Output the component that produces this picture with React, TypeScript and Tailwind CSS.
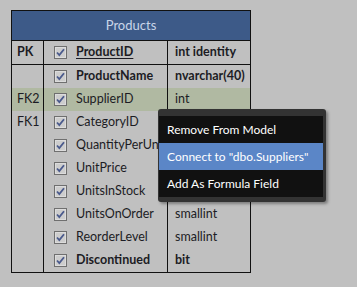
import React from 'react';

interface Column {
  key: string;
  name: string;
  type: string;
  bold?: boolean;
  highlight?: boolean;
}

const columns: Column[] = [
  { key: '', name: 'ProductName', type: 'nvarchar(40)', bold: true },
  { key: 'FK2', name: 'SupplierID', type: 'int', highlight: true },
  { key: 'FK1', name: 'CategoryID', type: 'int' },
  { key: '', name: 'QuantityPerUnit', type: 'nvarchar(20)' },
  { key: '', name: 'UnitPrice', type: 'money' },
  { key: '', name: 'UnitsInStock', type: 'smallint' },
  { key: '', name: 'UnitsOnOrder', type: 'smallint' },
  { key: '', name: 'ReorderLevel', type: 'smallint' },
  { key: '', name: 'Discontinued', type: 'bit', bold: true },
];

const Check = () => (
  <svg width="13" height="13" viewBox="0 0 13 13" className="shrink-0">
    <rect x="0.5" y="0.5" width="12" height="12" fill="#cdcdcd" stroke="#6f6f6f" />
    <rect x="1.5" y="1.5" width="10" height="10" fill="none" stroke="#dcdcdc" />
    <path d="M3 6.5 L5.3 9 L10 3.2" fill="none" stroke="#4a5a8c" strokeWidth="1.8" />
  </svg>
);

const menuItems = ['Remove From Model', 'Connect to "dbo.Suppliers"', 'Add As Formula Field'];

export default function App() {
  return (
    <div
      className="relative w-[357px] h-[287px] bg-[#c0c0c0] overflow-hidden text-[12.5px] text-[#1c1c24]"
      style={{ fontFamily: 'Lato, "Noto Sans", sans-serif' }}
    >
      <div className="absolute left-[11px] top-[10px] w-[240px] border border-[#111]">
        <div className="h-[30px] bg-[#3d5a88] border-b border-[#111] flex items-center justify-center text-[#c9d5e8] text-[13px]">
          Products
        </div>
        <div className="flex h-[24px] border-b border-[#111] font-bold">
          <div className="w-[32px] border-r border-[#111] pl-[5px] flex items-center">PK</div>
          <div className="w-[124px] border-r border-[#111] pl-[10px] flex items-center gap-[9px]">
            <Check />
            <span className="underline underline-offset-2">ProductID</span>
          </div>
          <div className="flex-1 pl-[7px] flex items-center whitespace-nowrap">int identity</div>
        </div>
        {columns.map((c) => (
          <div
            key={c.name}
            className={`flex h-[23px] ${c.highlight ? 'bg-[#b0b9a2]' : ''} ${c.bold ? 'font-bold' : ''}`}
          >
            <div className="w-[32px] border-r border-[#111] pl-[5px] flex items-center">{c.key}</div>
            <div className="w-[124px] border-r border-[#111] pl-[10px] flex items-center gap-[9px] overflow-hidden whitespace-nowrap">
              <Check />
              <span>{c.name}</span>
            </div>
            <div className="flex-1 pl-[7px] flex items-center whitespace-nowrap overflow-hidden">{c.type}</div>
          </div>
        ))}
      </div>

      <div className="absolute left-[158px] top-[109px] w-[168px] rounded-[3px] bg-[#333] pt-[7px] pb-[5px] pl-px pr-[3px] shadow-[2px_2px_3px_rgba(0,0,0,0.35)]">
        <div className="bg-[#111] text-white text-[12px]">
          {menuItems.map((m, i) => (
            <div
              key={m}
              className={`h-[27px] pl-[8px] flex items-center whitespace-nowrap ${i === 1 ? 'bg-[#5b86c7]' : ''}`}
            >
              {m}
            </div>
          ))}
        </div>
      </div>
    </div>
  );
}
